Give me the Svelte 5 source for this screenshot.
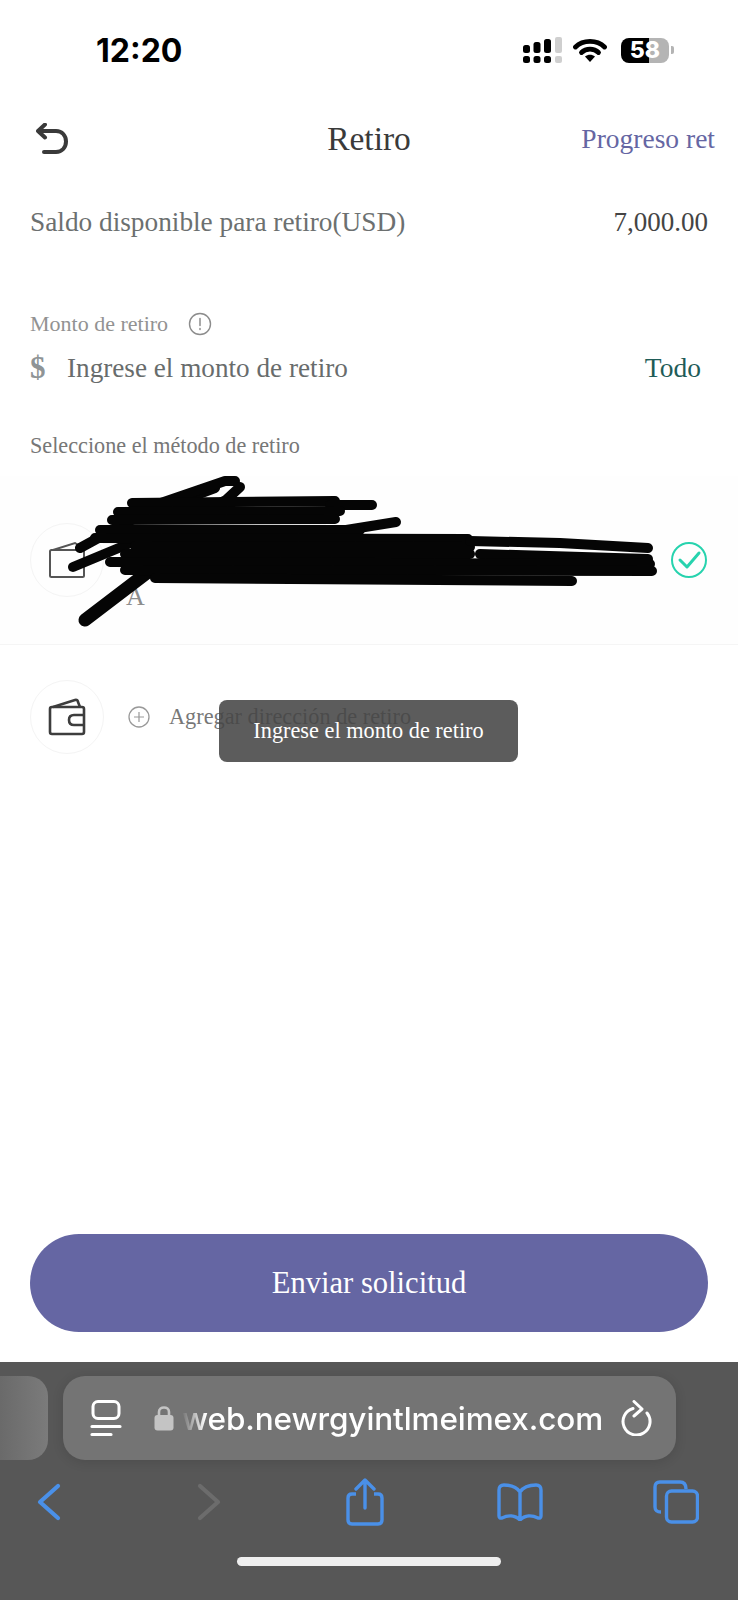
<script lang="ts">
    // scribble that hides the saved address, in page coordinates
    const scribble = [
        'M73 567 L150 535',
        'M80 548 L135 518 L215 488',
        'M155 505 L225 481 L235 481',
        'M240 487 L226 500 L205 511',
        'M132 503 L335 501',
        'M330 505 L372 505',
        'M118 512 L340 511',
        'M112 520 L335 519',
        'M340 531 L396 522',
        'M100 530 L360 530',
        'M95 538 L468 539',
        'M135 546 L470 547',
        'M470 541 L560 543 L648 548',
        'M125 554 L470 554',
        'M480 554 L648 559',
        'M110 562 L650 564',
        'M125 570 L652 571',
        'M155 578 L572 581',
    ];
</script>

<div class="phone">
    <div class="status">
        <span class="time">12:20</span>
        <div class="status-icons">
            <svg class="cell" width="40" height="26" viewBox="0 0 40 26">
                <rect x="0" y="8" width="7" height="8" rx="2.500"/>
                <rect x="10.500" y="5" width="7" height="11" rx="2.500"/>
                <rect x="21" y="2" width="7" height="14" rx="2.500"/>
                <rect x="32" y="0" width="7" height="16" rx="2" fill="#cfcfcf"/>
                <rect x="0" y="19" width="7" height="7" rx="2.500"/>
                <rect x="10.500" y="19" width="7" height="7" rx="2.500"/>
                <rect x="21" y="19" width="7" height="7" rx="2.500"/>
                <rect x="32" y="19" width="7" height="7" rx="2" fill="#cfcfcf"/>
            </svg>
            <svg class="wifi" width="34" height="24" viewBox="0 0 34 24">
                <path d="M2.500 9 C10 1.500 24 1.500 31.500 9" fill="none" stroke="#000" stroke-width="4.800" stroke-linecap="round"/>
                <path d="M8.500 14.500 C13 10 21 10 25.500 14.500" fill="none" stroke="#000" stroke-width="4.800" stroke-linecap="round"/>
                <path d="M12 18.500 C15 16 19 16 22 18.500 L17 24 Z" fill="#000"/>
            </svg>
            <div class="battery"><span>58</span></div>
            <i class="nub"></i>
        </div>
    </div>

    <header class="nav">
        <svg class="back" width="32" height="32" viewBox="0 0 32 32">
            <path d="M9 1.500 L2 8 L9 14.500 M2 8 H20 C26 8 30 12.500 30 18.500 C30 24.500 26 29 20 29 H8" fill="none" stroke="#3a3a3a" stroke-width="4" stroke-linecap="round" stroke-linejoin="round"/>
        </svg>
        <h1>Retiro</h1>
        <span class="progress">Progreso ret</span>
    </header>

    <div class="balance">
        <span>Saldo disponible para retiro(USD)</span>
        <span class="amount">7,000.00</span>
    </div>

    <div class="label-row">
        <span>Monto de retiro</span>
        <svg width="24" height="24" viewBox="0 0 24 24">
            <circle cx="12" cy="12" r="10.500" fill="none" stroke="#8c8c8c" stroke-width="1.400"/>
            <path d="M12 6.500 V13.500 M12 16.500 V17.500" stroke="#8c8c8c" stroke-width="1.500" stroke-linecap="round"/>
        </svg>
    </div>

    <div class="amount-row">
        <span class="dollar">$</span>
        <span class="placeholder">Ingrese el monto de retiro</span>
        <span class="todo">Todo</span>
    </div>

    <div class="method-label">Seleccione el método de retiro</div>

    <div class="method selected">
        <div class="circle">
            <svg width="38" height="38" viewBox="0 0 38 38">
                <path d="M5 9 L27 2 L30 4 L32 9" fill="none" stroke="#555" stroke-width="2"/>
                <rect x="2" y="9" width="34" height="27" rx="1.500" fill="none" stroke="#555" stroke-width="2"/>
            </svg>
        </div>
        <div class="method-text">
            <span class="bank-line">&nbsp;</span>
            <span class="bank-name">A</span>
        </div>
        <svg class="check" width="38" height="38" viewBox="0 0 38 38">
            <circle cx="19" cy="19" r="17" fill="none" stroke="#27d3ae" stroke-width="2"/>
            <path d="M10 19 L17 26 L29 12" fill="none" stroke="#27d3ae" stroke-width="3" stroke-linecap="round" stroke-linejoin="round"/>
        </svg>
    </div>

    <div class="method add">
        <div class="circle">
            <svg width="38" height="38" viewBox="0 0 38 38">
                <path d="M5 9 L27 2 Q29.500 1.500 30 4 L32 9" fill="none" stroke="#3d3d3d" stroke-width="2.600" stroke-linejoin="round"/>
                <rect x="2" y="9" width="34" height="27" rx="2" fill="none" stroke="#3d3d3d" stroke-width="2.600"/>
                <path d="M36 17 H26 Q21 17 21 22 Q21 27 26 27 H36" fill="none" stroke="#3d3d3d" stroke-width="2.600"/>
            </svg>
        </div>
        <svg class="plus" width="22" height="22" viewBox="0 0 22 22">
            <circle cx="11" cy="11" r="10" fill="none" stroke="#999" stroke-width="1.300"/>
            <path d="M11 6 V16 M6 11 H16" stroke="#999" stroke-width="1.200"/>
        </svg>
        <span class="add-text">Agregar dirección de retiro</span>
    </div>

    <div class="spacer"></div>

    <div class="submit-wrap">
        <button class="submit">Enviar solicitud</button>
    </div>

    <footer class="browser">
        <div class="tabs">
            <div class="tab-prev"></div>
            <div class="url-bar">
                <svg width="32" height="38" viewBox="0 0 32 38">
                    <rect x="3" y="2.500" width="26" height="17" rx="5" fill="none" stroke="#fff" stroke-width="3"/>
                    <path d="M2 27.500 H30 M2 35.500 H21" stroke="#fff" stroke-width="3.200" stroke-linecap="round"/>
                </svg>
                <svg class="lock" width="20" height="26" viewBox="0 0 20 26">
                    <path d="M5 11 V7 C5 1 15 1 15 7 V11" fill="none" stroke="#c4c4c4" stroke-width="2.600"/>
                    <rect x="0.500" y="10" width="19" height="15.500" rx="3" fill="#c4c4c4"/>
                </svg>
                <div class="url-clip">web.newrgyintlmeimex.com</div>
                <svg class="reload" width="32" height="36" viewBox="0 0 32 36">
                    <path d="M13 8.500 A13.500 13.500 0 1 0 27 13" fill="none" stroke="#fff" stroke-width="3" stroke-linecap="round"/>
                    <path d="M14 1.500 L22 9 L14 16" fill="none" stroke="#fff" stroke-width="3" stroke-linecap="round" stroke-linejoin="round"/>
                </svg>
            </div>
        </div>
        <div class="toolbar">
            <div class="tool">
                <svg width="24" height="38" viewBox="0 0 24 38">
                    <path d="M21 3 L3 19 L21 35" fill="none" stroke="#4a90e8" stroke-width="4.200" stroke-linecap="round" stroke-linejoin="round"/>
                </svg>
            </div>
            <div class="tool forward">
                <svg width="24" height="38" viewBox="0 0 24 38">
                    <path d="M3 3 L21 19 L3 35" fill="none" stroke="#6c6c6c" stroke-width="4.200" stroke-linecap="round" stroke-linejoin="round"/>
                </svg>
            </div>
            <div class="tool">
                <svg width="40" height="48" viewBox="0 0 40 48">
                    <path d="M11 16 H7 Q3 16 3 20 V42 Q3 46 7 46 H33 Q37 46 37 42 V20 Q37 16 33 16 H29" fill="none" stroke="#4a90e8" stroke-width="3.400"/>
                    <path d="M20 30 V3 M11 11 L20 2 L29 11" fill="none" stroke="#4a90e8" stroke-width="3.400" stroke-linecap="round" stroke-linejoin="round"/>
                </svg>
            </div>
            <div class="tool">
                <svg width="46" height="38" viewBox="0 0 46 38">
                    <path d="M23 9 C19 3 12 2 7 2 Q2 2 2 7 V33 Q2 35.500 5 35 C11 32 18 32 23 37 C28 32 35 32 41 35 Q44 35.500 44 33 V7 Q44 2 39 2 C34 2 27 3 23 9 Z M23 9 V36" fill="none" stroke="#4a90e8" stroke-width="3.400" stroke-linejoin="round"/>
                </svg>
            </div>
            <div class="tool">
                <svg width="46" height="44" viewBox="0 0 46 44">
                    <path d="M8 32 Q2 32 2 27 V7 Q2 2 7 2 H27 Q33 2 33 9" fill="none" stroke="#4a90e8" stroke-width="3.400"/>
                    <rect x="13.500" y="11" width="31" height="31" rx="5" fill="none" stroke="#4a90e8" stroke-width="3.400"/>
                </svg>
            </div>
        </div>
        <div class="home-bar"></div>
    </footer>

    <div class="toast">Ingrese el monto de retiro</div>

    <svg class="scribble" viewBox="0 0 738 1600">
        <path d="M85 620 L148 572" fill="none" stroke="#050505" stroke-width="13" stroke-linecap="round"/>
        {#each scribble as d}
            <path {d} fill="none" stroke="#050505" stroke-width="10" stroke-linecap="round" stroke-linejoin="round"/>
        {/each}
    </svg>
</div>

<style>
    :global(body) {
        margin: 0;
        background: #fff;
    }

    .phone {
        position: relative;
        width: 738px;
        height: 1600px;
        display: flex;
        flex-direction: column;
        overflow: hidden;
        background: #fff;
        font-family: "Liberation Serif", serif;
    }

    .status {
        display: flex;
        justify-content: space-between;
        align-items: center;
        height: 100px;
        padding: 0 64px 0 96px;
        box-sizing: border-box;
    }

    .time {
        font-family: Inter, sans-serif;
        font-weight: 700;
        font-size: 32px;
        color: #000;
    }

    .status-icons {
        display: flex;
        align-items: center;
    }

    .cell {
        margin-right: 10px;
    }

    .wifi {
        margin-right: 14px;
    }

    .battery {
        width: 48px;
        height: 25px;
        border-radius: 8px;
        background: linear-gradient(90deg, #000 58%, #b4b4b4 58%);
        display: flex;
        justify-content: center;
        align-items: center;
        color: #fff;
        font-family: Inter, sans-serif;
        font-weight: 800;
        font-size: 23px;
    }

    .nub {
        width: 3px;
        height: 8px;
        margin-left: 2px;
        background: #b4b4b4;
        border-radius: 0 2px 2px 0;
    }

    .nav {
        display: grid;
        grid-template-columns: 1fr auto 1fr;
        align-items: center;
        height: 78px;
        padding: 0 23px;
    }

    .back {
        margin-left: 13px;
    }

    h1 {
        margin: 0;
        font-weight: 400;
        font-size: 33.500px;
        color: #3a3a3a;
    }

    .progress {
        justify-self: end;
        font-size: 27.500px;
        color: #6566a3;
    }

    .balance {
        display: flex;
        justify-content: space-between;
        align-items: center;
        height: 40px;
        padding: 24px 30px 0;
        font-size: 27.300px;
        color: #6c7070;
    }

    .amount {
        color: #444;
        font-size: 27px;
    }

    .label-row {
        display: flex;
        align-items: center;
        gap: 20px;
        padding: 69px 30px 0;
        font-size: 22px;
        color: #929292;
    }

    .amount-row {
        display: flex;
        align-items: center;
        height: 44px;
        padding: 9px 37px 0 30px;
    }

    .dollar {
        font-size: 31px;
        font-weight: 700;
        color: #8f9496;
        width: 37px;
    }

    .placeholder {
        flex: 1;
        font-size: 27.200px;
        color: #686c6c;
    }

    .todo {
        font-size: 27.500px;
        color: #1f5c58;
    }

    .method-label {
        padding: 43px 30px 17px;
        font-size: 22.200px;
        color: #777;
    }

    .method {
        display: flex;
        align-items: center;
        padding: 0 30px;
    }

    .selected {
        height: 168px;
        background: #fefefe;
        border-bottom: 1px solid #f5f5f5;
    }

    .add {
        height: 144px;
    }

    .circle {
        width: 72px;
        height: 72px;
        border: 1px solid #f4f4f4;
        border-radius: 50%;
        display: flex;
        justify-content: center;
        align-items: center;
    }

    .method-text {
        flex: 1;
        display: flex;
        flex-direction: column;
        padding: 52px 0 0 22px;
        font-size: 26px;
        color: #8d8d8d;
    }

    .bank-line {
        height: 22px;
    }

    .plus {
        margin: 0 19px 0 24px;
    }

    .add-text {
        font-size: 22.300px;
        color: #777;
    }

    .spacer {
        flex: 1;
    }

    .submit-wrap {
        padding: 0 30px 30px;
    }

    .submit {
        width: 100%;
        height: 98px;
        border: 0;
        border-radius: 49px;
        background: #6566a3;
        color: #fff;
        font-family: inherit;
        font-size: 30.600px;
    }

    .browser {
        height: 238px;
        background: #575757;
        display: flex;
        flex-direction: column;
    }

    .tabs {
        display: flex;
        gap: 15px;
        padding-top: 14px;
    }

    .tab-prev {
        width: 48px;
        height: 84px;
        border-radius: 0 20px 20px 0;
        background: linear-gradient(90deg, #6a6a6a, #7b7b7b);
    }

    .url-bar {
        width: 613px;
        height: 84px;
        border-radius: 22px;
        background: #747474;
        box-shadow: 0 2px 12px rgba(0, 0, 0, 0.12);
        display: flex;
        align-items: center;
        padding: 0 24px 0 27px;
        box-sizing: border-box;
    }

    .lock {
        margin-left: 32px;
    }

    .url-clip {
        flex: 1;
        white-space: nowrap;
        margin-left: 8px;
        font-family: Inter, sans-serif;
        font-weight: 500;
        font-size: 31.500px;
        letter-spacing: -0.1px;
        color: #fff;
        mask-image: linear-gradient(90deg, transparent, #000 24px);
    }

    .toolbar {
        display: flex;
        justify-content: space-between;
        align-items: center;
        height: 68px;
        padding: 8px 38px 0 25px;
    }

    .tool {
        width: 48px;
        display: flex;
        justify-content: center;
    }

    .forward {
        margin-left: 4px;
    }

    .home-bar {
        width: 264px;
        height: 9px;
        margin: 21px auto 0;
        border-radius: 5px;
        background: #efefef;
    }

    .toast {
        position: absolute;
        left: 219px;
        top: 700px;
        width: 299px;
        height: 62px;
        border-radius: 8px;
        background: rgba(70, 70, 70, 0.88);
        color: #fff;
        font-size: 22.300px;
        display: flex;
        justify-content: center;
        align-items: center;
    }

    .scribble {
        position: absolute;
        inset: 0;
        width: 738px;
        height: 1600px;
        pointer-events: none;
    }
</style>
